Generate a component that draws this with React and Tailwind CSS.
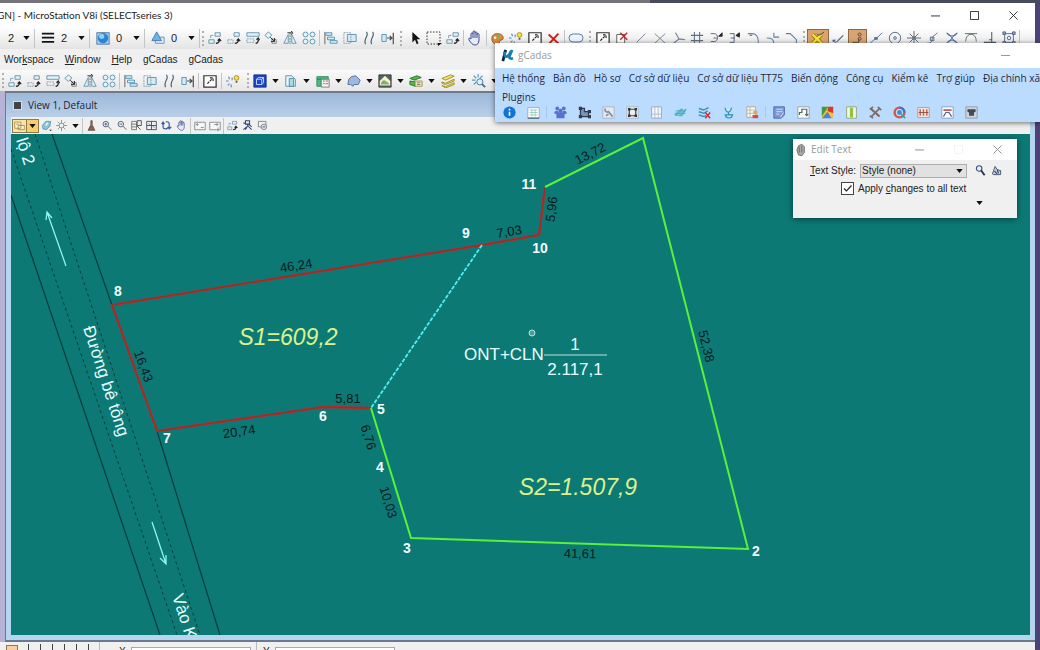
import { Fragment } from "react";

// 16x16 glyphs shared by every toolbar
const ICONS = {
  lines: <path d="M1 3h14M1 7.5h14M1 12.5h14" stroke="#111" strokeWidth="2" />,
  globe: (
    <>
      <rect x="1" y="2" width="14" height="13" fill="#b9d3e6" stroke="#3a6f9c" />
      <circle cx="8" cy="8" r="6" fill="#2a86d4" />
      <circle cx="6.5" cy="6" r="3" fill="#8fd0f5" />
    </>
  ),
  triangle: (
    <>
      <path d="M5 7h10v7H5z" fill="#e3edf8" stroke="#6b87ad" />
      <path d="M6.500 1l5.500 10H1z" fill="#6fb2e8" stroke="#3c78b4" />
    </>
  ),
  copy: (
    <>
      <path d="M1 10h6v4H1zM8 2h6v4H8z" fill="#e4f2fa" stroke="#5c8fa8" />
      <path d="M9 14c3 0 4-1 4-4M11 11l2-2 2 2.500" stroke="#222" strokeWidth="1.500" />
      <path d="M3 8V5h3" stroke="#7a98a8" />
    </>
  ),
  move: (
    <>
      <path d="M1 10h6v4H1z" stroke="#7a98a8" strokeDasharray="2 1" />
      <path d="M8 2h6v4H8z" fill="#e4f2fa" stroke="#5c8fa8" />
      <path d="M9 14c3 0 4-1 4-4M11 11l2-2 2 2.500" stroke="#222" strokeWidth="1.500" />
    </>
  ),
  parallel: (
    <>
      <path d="M1 2h14v4H1z" fill="#e4f2fa" stroke="#5c8fa8" />
      <path d="M1 9h8v4H1z" stroke="#7a98a8" strokeDasharray="2 1" />
      <path d="M11 14c2 0 3-1 3-4M12 10l2-2 1.500 2.500" stroke="#222" strokeWidth="1.500" />
    </>
  ),
  rotate: (
    <>
      <path d="M5 1l4 3.500-4 4-4-3.500z" fill="#e4f2fa" stroke="#5c8fa8" />
      <path d="M9 9l5 1v4H9z" stroke="#777" />
      <path d="M7 7l5 5M12 8v4H8" stroke="#222" />
    </>
  ),
  mirror: (
    <>
      <path d="M6 4v10H1zM10 4v10h5z" fill="#e4f2fa" stroke="#5c8fa8" />
      <path d="M8 2v13" stroke="#555" strokeDasharray="2 1" />
      <path d="M5 2h5M9 0l2.500 2L9 4" stroke="#222" />
    </>
  ),
  array: (
    <g fill="#e4f2fa" stroke="#4f8fae">
      <circle cx="4" cy="4" r="2.800" />
      <circle cx="12" cy="4" r="2.800" />
      <circle cx="4" cy="12" r="2.800" />
      <circle cx="12" cy="12" r="2.800" />
    </g>
  ),
  align: (
    <>
      <path d="M1 1v14" stroke="#555" />
      <path d="M2 2h7v3H2zM4 7h8v3H4zM7 11h8v3H7z" fill="#d5ebf6" stroke="#4f8fae" />
    </>
  ),
  stretch: (
    <>
      <path d="M5 4h10v8H5z" fill="#d5ebf6" stroke="#4f8fae" />
      <path d="M1 2h8v12H1z" stroke="#7a98a8" strokeDasharray="2 1" />
    </>
  ),
  waves: <path d="M5 1c4 4-4 8-1 14M12 1c4 4-4 8-1 14" stroke="#3f5f70" strokeWidth="1.300" />,
  trim: (
    <>
      <path d="M1 4h5v8H1z" fill="#d5ebf6" stroke="#4f8fae" />
      <path d="M14 2v13M7 8h5M10 5.500L12.500 8 10 10.500" stroke="#444" strokeWidth="1.300" />
    </>
  ),
  pointer: <path d="M5 1v12l3-3 2 5 2-1-2-4.500h4z" fill="#111" />,
  fence: (
    <>
      <path d="M1 2h13v12H1z" stroke="#333" strokeDasharray="1.500 1.500" />
      <path d="M12 13h4l-4 3z" fill="#111" />
    </>
  ),
  hand: (
    <path
      d="M4 9V4c0-1.500 2-1.500 2 0V2c0-1.500 2-1.500 2 0v1c0-1.500 2-1.500 2 0v1.500c0-1.500 2-1.300 2 0V10c0 3-1.500 5-4 5s-4-2-6-5c-1-2 1-2.500 2-1zM6 4v4M8 3v5M10 4v4"
      fill="#e6e9fa"
      stroke="#3f4c88"
    />
  ),
  palette: (
    <>
      <path d="M8 2c5 0 7 3 7 5 0 4-3 2-4 4s0 4-4 4-6-3-6-7 3-6 7-6z" fill="#d98a3a" stroke="#8a4a18" />
      <circle cx="5" cy="7" r="1.500" fill="#fff" />
      <circle cx="9" cy="5" r="1.500" fill="#3c7" />
    </>
  ),
  lamp: (
    <>
      <path d="M3 3l1 3M0 8h3M2 13l2-2M6 15v-3M7 7V4" stroke="#5b87c4" strokeWidth="1.300" />
      <circle cx="12" cy="4.500" r="2.700" fill="#f5e04a" stroke="#a88d10" />
      <path d="M11 8h2v2h-2z" fill="#555" />
    </>
  ),
  scaleBox: (
    <>
      <path d="M1 2h14v13H1z" fill="#fff" stroke="#333" strokeWidth="1.400" />
      <path d="M5 11l6-6M8 4.500h3.500V8" stroke="#222" strokeWidth="1.300" strokeDasharray="3 1" />
    </>
  ),
  cross: <path d="M2 3l12 11M14 2L3 14" stroke="#d0201c" strokeWidth="2.400" />,
  slot: <rect x="1" y="4" width="14" height="8" rx="4" fill="#eef4fc" stroke="#5f7fb2" />,
  boxDelete: (
    <>
      <path d="M2 4h9v10H2z" fill="#fff" stroke="#555" />
      <path d="M6 2l8 8M14 2L6 10" stroke="#c8201c" strokeWidth="1.600" />
    </>
  ),
  line: <path d="M3 13L13 3" stroke="#6b7c94" />,
  crossing: <path d="M2 3l12 11M14 3L2 14" stroke="#6b7c94" />,
  branch: <path d="M2 14l6-5-4-7M8 9l7 1" stroke="#6b7c94" strokeWidth="1.200" />,
  grid: <path d="M5 1v14M11 1v14M1 5h14M1 11h14" stroke="#5c6e88" strokeWidth="1.200" />,
  extend: (
    <>
      <path d="M2 3h4c5 0 5 9 0 9H2M5 8h4" stroke="#4a5a72" />
      <path d="M11 6l4-4v4z" fill="#222" stroke="#222" />
    </>
  ),
  extend2: (
    <>
      <path d="M2 3h5v10H2M3 8h5" stroke="#4a5a72" />
      <path d="M9 5l4-3v5z" fill="#222" stroke="#222" />
    </>
  ),
  fillet: <path d="M1 3h5c5 0 7 3 7 12M3 5h3" stroke="#5f7fa8" strokeWidth="1.200" />,
  fillet2: <path d="M1 8c5 0 8 1 8 7M9 2v5h6" stroke="#5f7fa8" strokeWidth="1.200" />,
  chamfer: <path d="M1 3h5l7 7v5" stroke="#5f7fa8" strokeWidth="1.200" />,
  snapOff: (
    <>
      <path d="M2 4l10 10M12 4L2 14" stroke="#9a7a14" strokeWidth="4.500" />
      <path d="M2 4l10 10M12 4L2 14" stroke="#f7e23c" strokeWidth="2.800" />
      <path d="M10 5l5-4M7 3l2 2" stroke="#333" />
    </>
  ),
  snapNear: <path d="M2 10c2 4 5 3 6 1l6-6M2 12l3-2" stroke="#4c5f86" strokeWidth="1.200" />,
  snapKey: (
    <>
      <path d="M3 13h7V9" stroke="#444" />
      <circle cx="11" cy="4" r="1.700" stroke="#444" />
      <circle cx="11" cy="9" r="1.700" stroke="#444" />
    </>
  ),
  snapMid: (
    <>
      <path d="M1 14l5-4 4-3 5-5" stroke="#4c6c9c" />
      <path d="M6 7h4v3H6z" fill="#4c6c9c" />
    </>
  ),
  snapCenter: (
    <>
      <circle cx="8" cy="8" r="6.500" stroke="#4c5f86" />
      <circle cx="8" cy="8" r="1.500" stroke="#4c5f86" />
    </>
  ),
  snapOrigin: (
    <>
      <path d="M8 0v16M0 8h16M3 3l10 10M13 3L3 13" stroke="#4c5f66" />
      <circle cx="8" cy="8" r="2" fill="#5c7280" />
    </>
  ),
  snapBisect: <path d="M1 14c4 0 6-1 6-5s3-3 6-7M5 7h4v4H5z" stroke="#4c5f86" />,
  snapCross: (
    <>
      <path d="M2 2c3 5 9 5 12 0M14 14c-3-5-9-5-12 0" stroke="#4c6c9c" strokeWidth="1.200" />
      <path d="M4 3l8 10M12 3L4 13" stroke="#4c6c9c" />
    </>
  ),
  snapTangent: <path d="M1 3h14M2 12c0-11 12-11 12 0" stroke="#4c5f66" />,
  snapPerp: <path d="M1 13h14M10 1v12M7 10h3" stroke="#4c5f66" strokeWidth="1.200" />,
  snapBox: (
    <>
      <path d="M3 3h10v10H3z" stroke="#4c5f86" />
      <circle cx="8" cy="8" r="2" stroke="#4c5f86" />
      <path d="M1 1h3v3H1zM12 1h3v3h-3zM1 12h3v3H1zM12 12h3v3h-3z" fill="#8fa6c8" stroke="#4c5f86" />
    </>
  ),
  cube: (
    <>
      <path d="M1 1h14v14H1z" fill="#1c45c8" stroke="#0e2a86" />
      <path d="M4 6h6v6H4zM4 6l2-2h6v6l-2 2M10 6l2-2" stroke="#cfe0ff" />
    </>
  ),
  page: (
    <>
      <path d="M2 2h7l4 4v8H2z" fill="#eaf4fb" stroke="#5f8aa6" />
      <path d="M6 5h5v9H6z" fill="#a8dce4" stroke="#3f8aa0" />
    </>
  ),
  sheet: (
    <>
      <path d="M1 3h13v3H1zM1 6h5v8H1z" fill="#4fb884" stroke="#2c8a5c" />
      <path d="M6 6h9v9H6z" fill="#f3f3f3" stroke="#777" />
      <path d="M8 8h2M8 11h2M11 8h3M11 11h3" stroke="#c05030" />
    </>
  ),
  cell: <path d="M5 3l5-1 5 5-2 5H8l-1 2-3-2H1l1-6z" fill="#9fb8dc" stroke="#486c9c" />,
  raster: (
    <>
      <path d="M1 1h14v14H1z" fill="#54675a" stroke="#333" />
      <path d="M2 8l6-6 6 6v5H2z" fill="#f6f3cf" />
      <path d="M3 12c1-5 4-6 6-4s3 1 4 4z" fill="#80b070" />
    </>
  ),
  reference: (
    <>
      <path d="M1 5l8-3 5 2-8 3zM1 8v4l6 2V9z" fill="#57b84f" stroke="#25702a" />
      <path d="M7 8h8v6H7z" fill="#f4e9b8" stroke="#a38a3a" />
      <path d="M9 10h4M9 12h4" stroke="#777" />
    </>
  ),
  levels: <path d="M1 5l10-4 4 1.500L5 7zM1 9l4 1.500L15 6v2L5 12 1 10.500zM1 13l4 1.500L15 10v2L5 16z" fill="#f2e463" stroke="#9a8a20" />,
  explore: (
    <>
      <path d="M2 2l3 3M7 0v4M0 7h4M2 12l3-3M12 2L9 5" stroke="#4c9cc4" strokeWidth="1.300" />
      <circle cx="9" cy="9" r="3.500" fill="#dff0fa" stroke="#3f6f90" />
      <path d="M11.500 11.500L15 15" stroke="#3f6f90" strokeWidth="2" />
    </>
  ),
  viewAttr: <path d="M1 3h9v9H1zM6 8h9v6H6zM3 6h5" fill="#fff3c8" stroke="#8a7440" />,
  display: (
    <>
      <path d="M2 8l5-6h7l-1 7-5 5-5-1z" fill="#8cc4dc" stroke="#467f9c" />
      <path d="M7 8l3-4" stroke="#e9f7ff" strokeWidth="2" />
      <path d="M12 14h4l-2 2z" fill="#111" />
    </>
  ),
  sun: (
    <>
      <path d="M8 0v16M0 8h16M2.500 2.500l11 11M13.500 2.500l-11 11" stroke="#687684" />
      <circle cx="8" cy="8" r="3.500" fill="#e8eef4" stroke="#687684" />
    </>
  ),
  brush: <path d="M7 1h2v6l4 8H3l4-8zM5 15l2-6M9 15V9" fill="#b06c50" stroke="#5a4038" />,
  zoomIn: (
    <>
      <circle cx="7" cy="6" r="4" fill="#eef4fa" stroke="#4b5870" strokeWidth="1.300" />
      <path d="M10 9l5 5M5 6h4M7 4v4" stroke="#4b5870" strokeWidth="1.300" />
    </>
  ),
  zoomOut: (
    <>
      <circle cx="7" cy="6" r="4" fill="#eef4fa" stroke="#4b5870" strokeWidth="1.300" />
      <path d="M10 9l5 5M5 6h4" stroke="#4b5870" strokeWidth="1.300" />
    </>
  ),
  windowArea: (
    <>
      <path d="M1 2h7v12H1zM1 6h7M1 10h7" stroke="#555" />
      <path d="M9 1h6v7H9zM8 8l6 6" stroke="#3d4c64" strokeWidth="1.300" />
    </>
  ),
  fit: <path d="M1 2h14v12H1zM8 2v12M1 8h14M4 5l2 2M12 11l-2-2" stroke="#3d4c64" strokeWidth="1.300" />,
  spin: <path d="M3 4v6c0 3 5 4 7 1M1 6l2-3 2 3M12 12V6c0-3-3-4-5-3M10 10l2 3 3-3" stroke="#33589c" strokeWidth="1.700" />,
  prevView: <path d="M1 3h14v10H1zM3 6h3M5 8l-2-2 2-2M9 10h4" fill="#f7f7f7" stroke="#6f7680" />,
  nextView: <path d="M1 3h14v10H1zM7 6h5M10 4l2 2-2 2M12 10v5" fill="#f7f7f7" stroke="#6f7680" />,
  walk: <path d="M5 1h6v5H5zM2 4l7 3-4 7M8 8l6 6M2 14l5-4M10 6l4 4" stroke="#2f466c" strokeWidth="1.500" />,
  clip: (
    <>
      <path d="M2 2h11v8H2z" fill="#eef1f5" stroke="#5a6470" />
      <circle cx="10" cy="10" r="4" fill="#dfe6ee" stroke="#5a6470" />
      <path d="M8 10h4" stroke="#222" />
    </>
  ),
  info: (
    <>
      <circle cx="8" cy="8" r="7.500" fill="#1173d4" />
      <path d="M8 7v5M8 3.500v2" stroke="#fff" strokeWidth="2" />
    </>
  ),
  table: (
    <>
      <path d="M1 2h14v13H1z" fill="#fff" stroke="#8fa4b4" />
      <path d="M3 5h10M3 8h10M3 11h10M6 4v9M10 4v9" stroke="#8fcab8" />
      <path d="M1 15h14" stroke="#66788c" strokeWidth="2" />
    </>
  ),
  people: (
    <g fill="#5a70d0">
      <circle cx="4" cy="3" r="2.300" />
      <circle cx="12" cy="3" r="2.300" />
      <circle cx="8" cy="6" r="2.600" />
      <path d="M0 9c1-4 5-4 6-1h4c1-3 5-3 6 1l-3 1v5H3v-5z" />
    </g>
  ),
  parcel: (
    <>
      <path d="M3 3v10h10V7H8V3z" fill="#7c93b8" stroke="#2e3c54" strokeWidth="1.500" />
      <path d="M1 1h4v4H1zM12 5h4v4h-4zM1 11h4v4H1zM12 11h4v4h-4z" fill="#2e3c54" />
    </>
  ),
  wrench: (
    <>
      <path d="M1 1h14v14H1z" fill="#e4e9ef" stroke="#a4b0be" />
      <path d="M4 3c-1 4 2 5 4 4l5 6M5 12l3-2" stroke="#8592a2" strokeWidth="2.200" />
    </>
  ),
  nodes: (
    <>
      <path d="M1 1h14v14H1z" fill="#eee" stroke="#a8b0b8" />
      <path d="M4 4h8v8H4z" stroke="#444" strokeWidth="1.500" />
      <path d="M2.500 2.500h3v3h-3zM10.500 2.500h3v3h-3zM2.500 10.500h3v3h-3zM10.500 10.500h3v3h-3z" fill="#333" />
    </>
  ),
  panel: (
    <>
      <path d="M2 1h12v14H2z" fill="#f4f6fa" stroke="#8f9eb4" />
      <path d="M6 1v14M10 1v14M2 10h12" stroke="#a9b6c8" />
    </>
  ),
  hatch: (
    <>
      <path d="M1 11L8 4h3l-7 8zM6 12l8-8h1l-5 8z" fill="#6fc4dc" stroke="#40a4ba" />
      <path d="M2 6h12M1 9h13" stroke="#40a4ba" />
    </>
  ),
  layersX: (
    <>
      <path d="M1 3l6 2 6-3M1 7l6 2 5-3M1 11l6 2 3-1" stroke="#3c94b8" strokeWidth="1.800" />
      <path d="M9 8l6 7M15 8l-6 7" stroke="#d8303c" strokeWidth="2" />
    </>
  ),
  stamp: <path d="M4 2c0 5 3 6 5 5s3-4 2-5M8 7v4M4 11c1 5 8 5 9 0z" fill="#bfe6f2" stroke="#2a94b4" strokeWidth="1.500" />,
  tableEdit: (
    <>
      <path d="M1 1h11v13H1z" fill="#fbf7ee" stroke="#a69c8c" />
      <path d="M1 5h11M1 9h11M5 1v13" stroke="#b8b09c" />
      <path d="M9 6h5v4H9z" fill="#d8a860" />
      <path d="M8 11h7v4H8z" fill="#e04848" />
    </>
  ),
  note: (
    <>
      <path d="M1 1h13v10l-4 4H1z" fill="#7c98d4" stroke="#44609c" />
      <path d="M4 4h8M4 7h8M4 10h4M9 14l4-6" stroke="#e4ecff" />
    </>
  ),
  flow: (
    <>
      <path d="M1 1h14v14H1z" fill="#fafafa" stroke="#8f979f" />
      <path d="M3 11V8h3V4h6v8M10 10l2 2 2-2" stroke="#4f6c5a" strokeWidth="1.500" />
    </>
  ),
  map: (
    <>
      <path d="M1 1h14v14H1z" fill="#f0c040" />
      <path d="M1 1h8L1 13z" fill="#3c9a48" />
      <path d="M9 1h6v8L8 6z" fill="#d83828" />
      <path d="M1 15l7-8 5 8z" fill="#4a84d4" />
    </>
  ),
  column: (
    <>
      <path d="M2 1h12v14H2z" fill="#f4f6e8" stroke="#8a9a6c" />
      <path d="M6 2h4v12H6z" fill="#8cc63c" />
    </>
  ),
  tools: (
    <>
      <path d="M2 3l11 10" stroke="#8a6450" strokeWidth="2.600" />
      <path d="M13 3L3 13M1 4l4-3M11 1l4 4M1 12l4 3" stroke="#76706c" strokeWidth="2" />
    </>
  ),
  palette2: (
    <>
      <circle cx="8" cy="8" r="6" stroke="#d05848" strokeWidth="3" />
      <path d="M8 2a6 6 0 016 6" stroke="#3c78c4" strokeWidth="3" />
      <circle cx="8" cy="8" r="3" fill="#4c88cc" />
      <path d="M10 10l5 5" stroke="#38a4a0" strokeWidth="2" />
    </>
  ),
  bars: (
    <>
      <path d="M1 2h14v12H1z" fill="#fbeee8" stroke="#a88c80" />
      <path d="M4 4v8M8 4v8M12 4v8" stroke="#d06850" strokeWidth="2" />
      <path d="M2 8h12" stroke="#804838" />
    </>
  ),
  bridge: (
    <>
      <path d="M1 1h14v14H1z" fill="#fafcff" stroke="#8494ac" />
      <path d="M3 5h10" stroke="#c04848" strokeWidth="2" />
      <path d="M3 13l3-5h4l3 5" stroke="#4c6898" strokeWidth="1.500" />
    </>
  ),
  device: (
    <>
      <path d="M1 1h14v14H1z" fill="#ccd2da" stroke="#8c949e" />
      <path d="M3 4h10v3l-2 1v4H5V8L3 7z" fill="#3f4854" />
    </>
  ),
  search: (
    <>
      <circle cx="6" cy="5" r="4" fill="#e4f0fa" stroke="#34507c" strokeWidth="1.600" />
      <path d="M9 8l5 7" stroke="#1f2f4c" strokeWidth="2.600" />
    </>
  ),
  eraser: (
    <>
      <path d="M2 13L6 2l3 5 5 1v6H4z" fill="#bfd0e6" stroke="#3f4f66" strokeWidth="1.300" />
      <path d="M5 9l4 4M9 7l2 5" stroke="#2c3c58" strokeWidth="1.500" />
    </>
  ),
};

const MODIFY = ["copy", "move", "parallel", "rotate", "mirror", "array"];
const ALTER = ["align", "stretch", "waves", "trim"];
const MAIN_DROPS = ["cube", "page", "sheet", "cell", "raster", "reference", "levels", "explore"];
const EDIT_TOOLS = ["scaleBox", "boxDelete", "line", "crossing", "branch", "grid", "extend", "extend2", "fillet", "fillet2", "chamfer"];
const SNAPS = ["snapOff", "snapNear", "snapKey", "snapMid", "snapCenter", "snapOrigin", "snapBisect", "snapCross", "snapTangent", "snapPerp", "snapBox"];
const CADAS_TOOLS = [
  ["people", "parcel", "wrench", "nodes", "panel", "hatch", "layersX", "stamp", "tableEdit"],
  ["note", "flow", "map", "column", "tools", "palette2", "bars", "bridge", "device"],
];
const CADAS_MENU = [
  "Hệ thống",
  "Bản đồ",
  "Hồ sơ",
  "Cơ sở dữ liệu",
  "Cơ sở dữ liệu TT75",
  "Biến động",
  "Công cụ",
  "Kiểm kê",
  "Trợ giúp",
  "Địa chính xã(",
];

// Side lengths, written along the parcel edges
const DIMENSIONS = [
  { text: "46,24", x: 296, y: 265, angle: -9 },
  { text: "7,03", x: 509, y: 231, angle: -9 },
  { text: "5,96", x: 551, y: 209, angle: -83 },
  { text: "13,72", x: 590, y: 153, angle: -27 },
  { text: "52,38", x: 707, y: 346, angle: 76 },
  { text: "41,61", x: 580, y: 553, angle: 1 },
  { text: "10,03", x: 389, y: 502, angle: 73 },
  { text: "6,76", x: 369, y: 437, angle: 73 },
  { text: "5,81", x: 348, y: 398, angle: 0 },
  { text: "20,74", x: 239, y: 431, angle: -8 },
  { text: "16,43", x: 144, y: 366, angle: 70 },
];

const VERTICES = [
  { text: "2", x: 756, y: 551 },
  { text: "3", x: 407, y: 548 },
  { text: "4", x: 380, y: 467 },
  { text: "5", x: 381, y: 409 },
  { text: "6", x: 323, y: 416 },
  { text: "7", x: 167, y: 438 },
  { text: "8", x: 118, y: 291 },
  { text: "9", x: 466, y: 233 },
  { text: "10", x: 540, y: 248 },
  { text: "11", x: 529, y: 184 },
];

function Glyph({ name, className = "size-4" }) {
  return (
    <svg viewBox="0 0 16 16" fill="none" className={`shrink-0 ${className}`} aria-hidden="true">
      {ICONS[name]}
    </svg>
  );
}

function Caret({ className = "" }) {
  return (
    <svg viewBox="0 0 8 5" className={`h-[4px] w-[7px] shrink-0 ${className}`} aria-hidden="true">
      <path d="M0 0h8L4 5z" fill="#111" />
    </svg>
  );
}

function ToolButton({ name, active = false, size = "size-4" }) {
  return (
    <button
      type="button"
      aria-label={name}
      className={`flex h-[19px] items-center justify-center ${active ? "border border-[#8a6a4a] bg-[#d9a470]" : ""}`}
    >
      <Glyph name={name} className={size} />
    </button>
  );
}

function Separator() {
  return <span className="mx-px h-[16px] w-px shrink-0 bg-[#c4c4c4]" />;
}

function Grip({ className = "mx-[2px]" }) {
  return <span className={`h-[15px] w-0 shrink-0 border-l-2 border-dotted border-[#b0b0b0] ${className}`} />;
}

function NumberDrop({ icon, label, value, className }) {
  return (
    <div className="flex h-[19px] shrink-0 items-center border-r border-[#c4c4c4]">
      {icon && (
        <span className="flex w-[26px] justify-center">
          <Glyph name={icon} className="size-[14px]" />
        </span>
      )}
      <span className="relative flex items-center">
        <select aria-label={label} defaultValue={value} className={`appearance-none bg-transparent text-[11px] ${className}`}>
          <option>{value}</option>
        </select>
        <Caret className="pointer-events-none absolute right-1" />
      </span>
    </div>
  );
}

function DropButton({ name }) {
  return (
    <div className="flex items-center">
      <ToolButton name={name} size="size-[14px]" />
      <button type="button" aria-label={`${name} options`} className="flex h-4 flex-1 items-center justify-center">
        <Caret />
      </button>
    </div>
  );
}

function WindowButtons({ className = "", cell = "w-[39px]", dim = "" }) {
  return (
    <div className={`flex h-full items-center ${className}`}>
      <button type="button" aria-label="Minimize" className={`flex h-full items-center justify-center ${cell}`}>
        <svg viewBox="0 0 10 10" className="size-[9px]" fill="none" stroke="currentColor">
          <path d="M0 5.500h10" />
        </svg>
      </button>
      <button type="button" aria-label="Maximize" className={`flex h-full items-center justify-center ${cell} ${dim}`}>
        <svg viewBox="0 0 10 10" className="size-[9px]" fill="none" stroke="currentColor">
          <path d="M.5.500h9v9h-9z" />
        </svg>
      </button>
      <button type="button" aria-label="Close" className={`flex h-full items-center justify-center ${cell}`}>
        <svg viewBox="0 0 10 10" className="size-[9px]" fill="none" stroke="currentColor">
          <path d="M.5.500l9 9M9.500.500l-9 9" />
        </svg>
      </button>
    </div>
  );
}

function AttributesToolbar() {
  return (
    <div className="flex h-[22px] items-center overflow-hidden bg-linear-to-b from-white to-[#e4e4e4]">
      <NumberDrop label="Level" value="2" className="w-[34px] pl-[8px]" />
      <NumberDrop icon="lines" label="Line weight" value="2" className="w-[28px]" />
      <NumberDrop icon="globe" label="Transparency" value="0" className="w-[28px]" />
      <NumberDrop icon="triangle" label="Priority" value="0" className="w-[28px]" />
      <Grip />
      <div className="grid w-[112px] shrink-0 grid-cols-6">
        {MODIFY.map((name) => <ToolButton key={name} name={name} size="size-[14px]" />)}
      </div>
      <Separator />
      <div className="grid w-[76px] shrink-0 grid-cols-4">
        {ALTER.map((name) => <ToolButton key={name} name={name} size="size-[14px]" />)}
      </div>
      <Grip className="mx-[3px]" />
      <div className="grid w-[57px] shrink-0 grid-cols-3">
        <ToolButton name="pointer" size="size-[14px]" />
        <ToolButton name="fence" />
        <ToolButton name="copy" size="size-[14px]" />
      </div>
      <Separator />
      <div className="grid w-[20px] shrink-0">
        <ToolButton name="hand" />
      </div>
      <Separator />
      <div className="grid w-[75px] shrink-0 grid-cols-4">
        <ToolButton name="palette" size="size-[13px]" />
        <ToolButton name="lamp" size="size-[14px]" />
        <ToolButton name="scaleBox" size="size-[14px]" />
        <ToolButton name="cross" size="size-[13px]" />
      </div>
      <Separator />
      <div className="grid w-[20px] shrink-0">
        <ToolButton name="slot" />
      </div>
      <Grip className="mx-[3px]" />
      <div className="grid w-[207px] shrink-0 grid-cols-11">
        {EDIT_TOOLS.map((name) => <ToolButton key={name} name={name} size="size-[14px]" />)}
      </div>
      <Grip />
      <div className="grid w-[211px] shrink-0 grid-cols-[22px_repeat(10,1fr)]">
        {SNAPS.map((name) => (
          <ToolButton key={name} name={name} size="size-[14px]" active={name === "snapOff" || name === "snapKey"} />
        ))}
      </div>
      <Separator />
    </div>
  );
}

function MainToolbar() {
  return (
    <div className="flex h-[21px] items-center overflow-hidden bg-linear-to-b from-[#fafafa] to-[#e6e6e6]">
      <Grip />
      <div className="grid w-[112px] shrink-0 grid-cols-6">
        {MODIFY.map((name) => <ToolButton key={name} name={name} size="size-[14px]" />)}
      </div>
      <Separator />
      <div className="grid w-[76px] shrink-0 grid-cols-4">
        {ALTER.map((name) => <ToolButton key={name} name={name} size="size-[14px]" />)}
      </div>
      <Separator />
      <div className="grid w-[20px] shrink-0">
        <ToolButton name="scaleBox" size="size-[14px]" />
      </div>
      <Separator />
      <div className="grid w-[20px] shrink-0">
        <ToolButton name="lamp" size="size-[14px]" />
      </div>
      <Grip className="mx-[4px]" />
      <div className="grid w-[250px] shrink-0 grid-cols-8">
        {MAIN_DROPS.map((name) => <DropButton key={name} name={name} />)}
      </div>
    </div>
  );
}

function ViewToolbar() {
  return (
    <div className="flex h-[17px] items-center overflow-hidden bg-[#f0f0f0]">
      <button type="button" aria-label="View attributes" className="ml-px flex h-[14px] w-[15px] items-center justify-center border border-[#8f7a50] bg-[#fbe3a4]">
        <Glyph name="viewAttr" className="size-[11px]" />
      </button>
      <button type="button" aria-label="View attributes options" className="flex h-[14px] w-[12px] items-center justify-center border border-l-0 border-[#8f7a50] bg-[#f9cf6c]">
        <Caret />
      </button>
      <div className="grid w-[30px] shrink-0 grid-cols-2">
        <ToolButton name="display" size="size-[11px]" />
        <ToolButton name="sun" size="size-[11px]" />
      </div>
      <button type="button" aria-label="Brightness" className="flex w-[12px] items-center justify-center">
        <Caret />
      </button>
      <Separator />
      <div className="grid w-[105px] shrink-0 grid-cols-7">
        {["brush", "zoomIn", "zoomOut", "windowArea", "fit", "spin", "hand"].map((name) => (
          <ToolButton key={name} name={name} size="size-[11px]" />
        ))}
      </div>
      <Separator />
      <div className="grid w-[30px] shrink-0 grid-cols-2">
        <ToolButton name="prevView" size="size-[12px]" />
        <ToolButton name="nextView" size="size-[12px]" />
      </div>
      <Separator />
      <div className="grid w-[45px] shrink-0 grid-cols-3">
        <ToolButton name="copy" size="size-[11px]" />
        <ToolButton name="walk" size="size-[11px]" />
        <ToolButton name="clip" size="size-[11px]" />
      </div>
    </div>
  );
}

function ParcelDrawing() {
  return (
    <svg
      viewBox="11 134 1019 501"
      preserveAspectRatio="xMinYMin slice"
      className="absolute inset-0 size-full"
      fill="none"
      fontFamily="'Liberation Sans', Arial, sans-serif"
      role="img"
      aria-label="Parcel plan"
    >
      {/* road */}
      <g stroke="#083c3c">
        <path d="M11 195L160 635M52 134L112 305M157 431L220 635" strokeWidth="1.200" />
        <path d="M11 149L177 635M35 134L117 383 200 635" strokeDasharray="3 3" />
      </g>
      <g stroke="#8ff4f0" strokeWidth="1.300">
        <path d="M66 266L47 212M46 220l1-8 5 6" />
        <path d="M152 522l14 42M160 558l6 6v-9" />
      </g>
      <g fill="#e8ffff" fontSize="17">
        <text transform="translate(16 140) rotate(72)">lộ 2</text>
        <text transform="translate(83 328) rotate(72)">Đường bê tông</text>
        <text transform="translate(172 596) rotate(72)">Vào K</text>
      </g>

      {/* S1 */}
      <path d="M545 187l-6 48-57 10-370 60 45 126 166-24 48 1" stroke="#b82a2a" strokeWidth="2.400" />
      <path d="M545 187l-6 48-57 10-370 60 45 126 166-24 48 1" stroke="#5c3c2c" strokeWidth=".5" />
      {/* S2 */}
      <path d="M545 187l98-49 105 411-337-11-40-130" stroke="#5af03c" strokeWidth="2" />
      <path d="M482 245L371 408" stroke="#4ff0f0" strokeWidth="1.800" strokeDasharray="4 1.500" />

      <g fill="#0a1a1c" fontSize="13" textAnchor="middle">
        {DIMENSIONS.map(({ text, x, y, angle }) => (
          <text key={text} transform={`translate(${x} ${y}) rotate(${angle})`} dy="5">{text}</text>
        ))}
      </g>
      <g fill="#f4ffff" fontSize="14" fontWeight="bold" textAnchor="middle">
        {VERTICES.map(({ text, x, y }) => (
          <text key={text} x={x} y={y} dy="5">{text}</text>
        ))}
      </g>

      <g fill="#dcf08c" fontSize="23" fontStyle="italic" textAnchor="middle">
        <text x="288" y="345">S1=609,2</text>
        <text x="578" y="495">S2=1.507,9</text>
      </g>
      <g fill="#e8ffff" fontSize="17">
        <text x="464" y="360">ONT+CLN</text>
        <text x="575" y="350" textAnchor="middle">1</text>
        <text x="575" y="375" textAnchor="middle">2.117,1</text>
      </g>
      <path d="M544 355h63" stroke="#b8e4e0" />
      <circle cx="532" cy="333" r="3" stroke="#b8e4e0" fill="#4f9c98" />
    </svg>
  );
}

function EditTextDialog() {
  return (
    <section className="absolute top-[5px] right-[13px] w-[224px] bg-[#f0f0f0] pb-[8px] font-['Liberation_Sans',Arial,sans-serif] text-[10px] text-[#222] shadow-[0_1px_6px_rgba(0,0,0,0.5)]">
      <header className="flex h-[21px] items-center bg-white pl-[3px] text-[#999]">
        <svg viewBox="0 0 12 16" className="h-[14px] w-[10px]" fill="#aaa" stroke="#666">
          <path d="M3 14L1 8l2-5 4-2 3 3v7l-3 4zM4 4v7M7 3v8" />
        </svg>
        <h2 className="pl-[5px] font-['Open_Sans','Noto_Sans',sans-serif] text-[10px]">Edit Text</h2>
        <WindowButtons className="ml-auto text-[#888]" dim="opacity-10" />
      </header>
      <div className="flex h-[21px] items-center pl-[17px]">
        <label htmlFor="text-style" className="w-[50px]">
          <u>T</u>ext Style:
        </label>
        <span className="relative flex items-center">
          <select id="text-style" className="h-[14px] w-[107px] appearance-none border border-[#adadad] bg-[#e1e1e1] pl-px leading-none">
            <option>Style (none)</option>
          </select>
          <Caret className="pointer-events-none absolute right-[4px]" />
        </span>
        <button type="button" aria-label="Find style" className="ml-[5px] flex w-[16px] justify-center">
          <Glyph name="search" className="size-[11px]" />
        </button>
        <button type="button" aria-label="Clear style" className="flex w-[17px] justify-center">
          <Glyph name="eraser" className="size-[11px]" />
        </button>
      </div>
      <label className="flex h-[14px] items-center gap-1 pl-[48px]">
        <span className="relative flex">
          <input type="checkbox" defaultChecked className="size-[13px] appearance-none border border-[#444] bg-white" />
          <svg viewBox="0 0 13 13" className="pointer-events-none absolute inset-0" fill="none" stroke="#222" strokeWidth="1.200">
            <path d="M3 6.500L5.500 9 10.500 3.500" />
          </svg>
        </span>
        <span>
          Apply <u>c</u>hanges to all text
        </span>
      </label>
      <button type="button" aria-label="More options" className="ml-[180px] flex h-[15px] w-[13px] items-center justify-center">
        <Caret />
      </button>
    </section>
  );
}

function CadasWindow() {
  return (
    <section className="absolute top-[43px] right-0 left-[495px] overflow-hidden bg-[#bcdcff] font-['Open_Sans','Noto_Sans',sans-serif] text-[10px] text-[#1c2838] shadow-[0_1px_5px_rgba(0,0,0,0.55)]">
      <header className="flex h-[25px] items-center bg-white pl-[6px] text-[#9a9a9a]">
        <svg viewBox="0 0 14 14" className="size-[13px]" fill="none" strokeWidth="3">
          <path d="M5 1L2 13" stroke="#10243c" />
          <path d="M4 3c-1 8 4 6 7-1M12 1L9 8c0 2 1 3 4 2" stroke="#1480b4" />
        </svg>
        <h2 className="pl-[4px] text-[10px]">gCadas</h2>
        <button type="button" aria-label="Minimize" className="mr-[30px] ml-auto h-px w-[9px] bg-[#999]" />
      </header>
      <nav>
        <ul className="flex gap-[8px] pl-[7px] leading-[20px] whitespace-nowrap">
          {CADAS_MENU.map((item) => (
            <li key={item}>
              <button type="button">{item}</button>
            </li>
          ))}
        </ul>
        <button type="button" className="block pl-[7px] leading-[18px]">Plugins</button>
      </nav>
      <div className="flex h-[16px] items-center pb-[4px] pl-[2px]">
        <div className="grid w-[48px] shrink-0 grid-cols-2">
          <ToolButton name="info" size="size-[13px]" />
          <ToolButton name="table" size="size-[13px]" />
        </div>
        {CADAS_TOOLS.map((group, idx) => (
          <Fragment key={idx}>
            <span className="mx-px h-[12px] w-px shrink-0 bg-[#a8c8ec]" />
            <div className="grid w-[216px] shrink-0 grid-cols-9">
              {group.map((name) => <ToolButton key={name} name={name} size="size-[13px]" />)}
            </div>
          </Fragment>
        ))}
      </div>
    </section>
  );
}

function StatusStrip() {
  return (
    <div className="flex h-[8px] shrink-0 items-start overflow-hidden bg-[#f0f0f0] pl-[6px] text-[10px] leading-none">
      <span className="mt-[3px] h-[8px] w-[12px] border border-[#8f7a50] bg-[#f9cf9c]" />
      <div className="mt-[2px] flex gap-[11px] pl-[10px]">
        {[0, 1, 2, 3, 4, 5].map((tick) => (
          <span key={tick} className="h-[8px] w-px bg-[#444]" />
        ))}
      </div>
      <span className="ml-[10px] h-[8px] w-px bg-[#bbb]" />
      <label htmlFor="coord-x" className="mt-[5px] ml-[19px] w-[12px]">X</label>
      <input id="coord-x" className="mt-[5px] h-[14px] w-[120px] border border-[#aaa] bg-white" />
      <span className="ml-[5px] h-[8px] w-px bg-[#bbb]" />
      <label htmlFor="coord-y" className="mt-[5px] ml-[6px] w-[12px]">Y</label>
      <input id="coord-y" className="mt-[5px] h-[14px] w-[120px] border border-[#aaa] bg-white" />
    </div>
  );
}

export default function App() {
  return (
    <div className="relative flex h-screen flex-col overflow-hidden bg-[#4d4278] pr-[5px] font-['Liberation_Sans',Arial,sans-serif] text-[#222]">
      <div className="-mr-[5px] flex h-[3px] shrink-0 bg-[#75737a]">
        <span className="ml-auto w-3/8 bg-[#474b5c]" />
      </div>
      <header className="flex h-[24px] shrink-0 items-center justify-between bg-white">
        <h1 className="-ml-[3px] font-['Lato','Noto_Sans',sans-serif] text-[10px] whitespace-nowrap">
          GN] - MicroStation V8i (SELECTseries 3)
        </h1>
        <WindowButtons className="mr-[2px] text-[#222]" />
      </header>
      <AttributesToolbar />
      <nav className="flex h-[21px] shrink-0 items-center gap-[11px] bg-[#f0f0f0] pl-[4px] text-[10px]">
        <button type="button">Wor<u>k</u>space</button>
        <button type="button"><u>W</u>indow</button>
        <button type="button"><u>H</u>elp</button>
        <button type="button">gCadas</button>
        <button type="button">gCadas</button>
      </nav>
      <MainToolbar />

      <main className="flex min-h-0 flex-1 flex-col bg-[#b6b3d6] pl-[5px]">
        <div className="flex min-h-0 flex-1 flex-col border-t-2 border-b-2 border-l border-[#6c7a8c] bg-[#b4d6ee] pr-[5px] pb-[5px] pl-[5px]">
          <div className="-mr-[5px] -ml-[5px] flex h-[24px] shrink-0 items-center bg-linear-to-b from-[#9db8da] to-[#b9cfe8] pl-[7px]">
            <span className="size-[9px] border border-[#ddd] bg-[#444]" />
            <h2 className="pl-[6px] font-['Open_Sans','Noto_Sans',sans-serif] text-[10px] text-[#1c2430]">View 1, Default</h2>
          </div>
          <ViewToolbar />
          <div className="relative min-h-0 flex-1 overflow-hidden bg-[#0c7975]">
            <ParcelDrawing />
            <EditTextDialog />
          </div>
        </div>
      </main>
      <StatusStrip />
      <CadasWindow />
    </div>
  );
}
